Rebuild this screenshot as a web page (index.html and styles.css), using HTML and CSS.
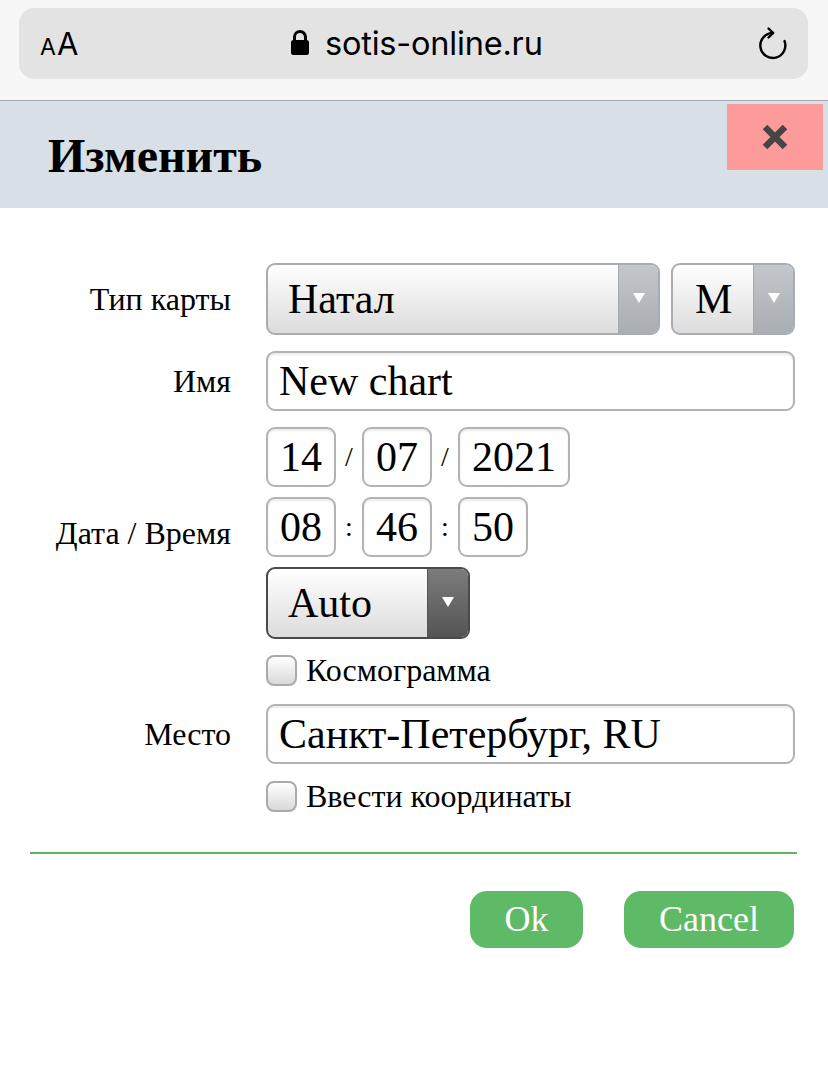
FILE: index.html
```html
<!DOCTYPE html>
<html lang="ru">
<head>
<meta charset="utf-8">
<title>Изменить</title>
<link rel="stylesheet" href="styles.css">
</head>
<body>
<div class="topbar">
  <div class="urlbar">
    <span class="aa"><span class="a-small">A</span><span class="a-big">A</span></span>
    <span class="address">
      <svg class="lock" width="20" height="27" viewBox="0 0 20 27"><path d="M4.5 12 V8 a5.5 5.5 0 0 1 11 0 V12" fill="none" stroke="#000" stroke-width="3"/><rect x="1" y="11" width="18" height="15" rx="2.5" fill="#000"/></svg>
      <span class="host">sotis-online.ru</span>
    </span>
    <svg class="reload" width="34" height="36" viewBox="0 0 34 36"><path d="M17 7 A12.5 12.5 0 1 0 28.5 15" fill="none" stroke="#000" stroke-width="2.4" stroke-linecap="round"/><path d="M12.5 2.5 L17.2 7 L12.5 11.5" fill="none" stroke="#000" stroke-width="2.4" stroke-linecap="round" stroke-linejoin="round"/></svg>
  </div>
</div>
<div class="header">
  <h1 class="title">Изменить</h1>
  <div class="close"><svg width="28" height="28" viewBox="0 0 28 28"><path d="M4 4 L24 24 M24 4 L4 24" stroke="#454545" stroke-width="6.5" stroke-linecap="butt"/></svg></div>
</div>
<div class="form">
  <div class="label">Тип карты</div>
  <div class="field type-row">
    <div class="select light wide"><span class="value">Натал</span><span class="arrow"></span></div>
    <div class="select light narrow"><span class="value">M</span><span class="arrow"></span></div>
  </div>

  <div class="label">Имя</div>
  <div class="field"><div class="input full">New chart</div></div>

  <div class="label">Дата / Время</div>
  <div class="field datetime">
    <div class="dt-row">
      <div class="input box2">14</div><span class="sep">/</span><div class="input box2">07</div><span class="sep">/</span><div class="input box4">2021</div>
    </div>
    <div class="dt-row">
      <div class="input box2">08</div><span class="sep">:</span><div class="input box2">46</div><span class="sep">:</span><div class="input box2">50</div>
    </div>
    <div class="select dark auto"><span class="value">Auto</span><span class="arrow"></span></div>
  </div>

  <div class="label"></div>
  <div class="field check"><span class="checkbox"></span><span class="check-text">Космограмма</span></div>

  <div class="label place-label">Место</div>
  <div class="field place"><div class="input full">Санкт-Петербург, RU</div></div>

  <div class="label"></div>
  <div class="field check coords"><span class="checkbox"></span><span class="check-text">Ввести координаты</span></div>
</div>
<div class="footer">
  <div class="rule"></div>
  <div class="buttons">
    <div class="btn ok">Ok</div>
    <div class="btn cancel">Cancel</div>
  </div>
</div>
</body>
</html>
```
FILE: styles.css
```css
* { box-sizing: border-box; }
html, body { margin: 0; padding: 0; background: #fff; }
body {
  width: 828px;
  font-family: "Liberation Serif", "Times New Roman", serif;
  color: #000;
}

/* browser chrome */
.topbar {
  height: 100px;
  background: #f7f7f7;
  padding: 8px 20px 0 19px;
}
.urlbar {
  height: 71px;
  background: #e3e3e3;
  border-radius: 15px;
  display: flex;
  align-items: center;
  padding: 0 18px 0 21px;
  font-family: Inter, "Liberation Sans", sans-serif;
}
.aa { display: flex; align-items: baseline; width: 120px; }
.a-small { font-size: 23px; }
.a-big { font-size: 31px; margin-left: 1px; }
.address {
  flex: 1;
  display: flex;
  align-items: center;
  justify-content: flex-start;
  padding-left: 130px;
}
.lock { margin-right: 15px; margin-top: -2px; }
.host { font-size: 32.5px; letter-spacing: -0.2px; }

/* header */
.header {
  height: 108px;
  border-top: 1px solid #a4a8ac;
  background: #d8dfe7;
  display: flex;
  justify-content: space-between;
  align-items: flex-start;
}
.title {
  margin: 0;
  padding: 29px 0 0 48px;
  font-size: 48px;
  font-weight: bold;
  line-height: 52px;
}
.close {
  margin: 3px 5px 0 0;
  width: 96px;
  height: 66px;
  background: #fd9b9b;
  display: flex;
  align-items: center;
  justify-content: center;
}

/* form */
.form {
  display: grid;
  grid-template-columns: 231px 529px;
  column-gap: 35px;
  row-gap: 16px;
  padding-top: 55px;
}
.label {
  justify-self: end;
  align-self: center;
  font-size: 32px;
  line-height: 36px;
}
.field { display: flex; }
.type-row { gap: 11px; }

.select {
  height: 72px;
  border-radius: 9px;
  display: flex;
  overflow: hidden;
  border: 2px solid #a9adb2;
  background: linear-gradient(#ffffff, #dcdcdc);
}
.select .value {
  flex: 1;
  font-size: 42px;
  line-height: 68px;
  padding-left: 20px;
}
.select .arrow {
  width: 40px;
  position: relative;
  border-left: 1px solid #a5aab0;
  background: linear-gradient(#c3c7cc, #a9aeb4);
}
.select .arrow::after {
  content: "";
  position: absolute;
  left: 50%;
  top: 50%;
  margin: -6px 0 0 -6px;
  border-left: 6px solid transparent;
  border-right: 6px solid transparent;
  border-top: 10px solid #fff;
}
.select.wide { width: 394px; }
.select.narrow { width: 124px; }
.select.narrow .value { padding-left: 22px; }

.select.dark { border-color: #4a4a4a; }
.select.dark .arrow {
  width: 41px;
  border-left: 1px solid #555;
  background: linear-gradient(#7c7c7c, #545454);
}
.select.auto { width: 204px; }

.input {
  height: 60px;
  border: 2px solid #b3b3b3;
  border-radius: 9px;
  background: #fff;
  box-shadow: inset 0 2px 2px rgba(0,0,0,0.08);
  font-size: 42px;
  line-height: 56px;
  padding-left: 11px;
}
.input.full { width: 529px; }
.box2 { width: 70px; padding-left: 0; text-align: center; }
.box4 { width: 112px; padding-left: 0; text-align: center; }
.datetime { flex-direction: column; gap: 10px; }
.dt-row { display: flex; align-items: center; }
.sep { width: 26px; text-align: center; font-size: 28px; }

.check { align-items: center; height: 31px; }
.checkbox {
  width: 31px;
  height: 31px;
  border: 2px solid #aaa;
  border-radius: 8px;
  background: linear-gradient(#ffffff, #d9d9d9);
}
.check-text { font-size: 32px; margin-left: 9px; }
.place-label, .place { margin-top: 2px; }
.coords { margin-top: 1px; }

/* footer */
.footer { padding: 40px 0 0 30px; }
.rule { width: 767px; height: 2px; background: #62b35e; }
.buttons {
  display: flex;
  justify-content: flex-end;
  gap: 41px;
  width: 764px;
  margin-top: 37px;
}
.btn {
  height: 57px;
  border-radius: 17px;
  background: #5fba67;
  color: #fff;
  font-size: 36px;
  line-height: 57px;
  text-align: center;
}
.ok { width: 113px; }
.cancel { width: 170px; }
```
